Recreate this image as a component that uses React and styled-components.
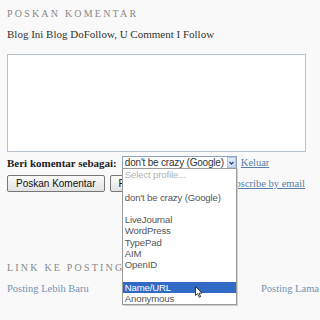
import React from "react";
import styled, { createGlobalStyle } from "styled-components";

const GlobalStyle = createGlobalStyle`
  html, body {
    margin: 0;
    padding: 0;
    background: #f9f9f9;
    overflow: hidden;
  }
`;

const Page = styled.div`
  width: 319px;
  height: 320px;
  padding: 0 14px 0 7px;
  box-sizing: border-box;
  font-family: "Liberation Serif", "Times New Roman", serif;
  color: #333;
`;

const SectionTitle = styled.h4`
  margin: ${(props) => props.top}px 0 0;
  font-size: 10px;
  line-height: 12px;
  font-weight: normal;
  letter-spacing: 2.2px;
  color: #888;
  white-space: nowrap;
`;

const Note = styled.p`
  margin: 7px 0 0;
  font-size: 11px;
  line-height: 14px;
  color: #333;
`;

const TextBox = styled.div`
  margin-top: 13px;
  width: 299px;
  height: 98px;
  box-sizing: border-box;
  background: #fff;
  border: 1px solid #b4c2d0;
`;

const IdentityRow = styled.div`
  margin-top: 4px;
  display: flex;
  align-items: center;
  height: 13px;
`;

const Label = styled.span`
  font-size: 11px;
  font-weight: bold;
  color: #222;
  margin-right: 5px;
  white-space: nowrap;
`;

const SelectWrap = styled.div`
  position: relative;
  flex-shrink: 0;
  width: 115px;
  height: 13px;
  z-index: 5;
`;

const SelectBox = styled.div`
  display: flex;
  align-items: center;
  height: 13px;
  box-sizing: border-box;
  background: #fff;
  border: 1px solid #8fa3ba;
  font-family: "Liberation Sans", Arial, sans-serif;
  font-size: 10px;
  letter-spacing: -0.2px;
  color: #333;
  padding-left: 2px;
  white-space: nowrap;
`;

const SelectText = styled.span`
  flex: 1;
  overflow: hidden;
`;

const ArrowButton = styled.span`
  width: 9px;
  height: 11px;
  box-sizing: border-box;
  background: linear-gradient(#e4eefa, #c6d8ef);
  border: 1px solid #b3c6de;
  display: flex;
  align-items: center;
  justify-content: center;
`;

const ListBox = styled.ul`
  position: absolute;
  top: 12px;
  left: 0;
  width: 115px;
  margin: 0;
  padding: 0;
  list-style: none;
  box-sizing: border-box;
  background: #fff;
  border: 1px solid #9a9a9a;
  box-shadow: 1px 1px 0 #cfcfcf;
  font-family: "Liberation Sans", Arial, sans-serif;
  font-size: 9.6px;
  letter-spacing: -0.15px;
`;

const Option = styled.li`
  position: relative;
  height: 11.25px;
  line-height: 11.25px;
  padding-left: 2px;
  white-space: nowrap;
  color: ${(props) => (props.muted ? "#b4b4b4" : props.active ? "#fff" : "#555")};
  background: ${(props) => (props.active ? "#316ac5" : "transparent")};
`;

const Cursor = styled.svg`
  position: absolute;
  left: 72px;
  top: 4px;
`;

const TextLink = styled.a`
  font-size: 10.5px;
  color: #5a7ea6;
  text-decoration: underline;
  white-space: nowrap;
`;

const KeluarLink = styled(TextLink)`
  margin-left: 4px;
`;

const ButtonRow = styled.div`
  margin-top: 6px;
  display: flex;
  align-items: center;
  gap: 5px;
`;

const Button = styled.button`
  flex-shrink: 0;
  height: 17px;
  padding: 0 8px;
  border: 1px solid #777;
  border-radius: 2px;
  background: linear-gradient(#fbfbfb, #e2e2e2);
  font-family: "Liberation Sans", Arial, sans-serif;
  font-size: 10px;
  color: #111;
  line-height: 15px;
  white-space: nowrap;
`;

const SubscribeLink = styled(TextLink)`
  margin-left: auto;
`;

const Pager = styled.div`
  margin: 8px -14px 0 0;
  display: flex;
  justify-content: space-between;
  line-height: 14px;
  font-size: 10.5px;
`;

const PagerLink = styled.a`
  color: #7393b6;
  text-decoration: none;
  white-space: nowrap;
`;

const profiles = [
  { label: "Select profile...", muted: true },
  { label: "" },
  { label: "don't be crazy (Google)" },
  { label: "" },
  { label: "LiveJournal" },
  { label: "WordPress" },
  { label: "TypePad" },
  { label: "AIM" },
  { label: "OpenID" },
  { label: "" },
  { label: "Name/URL", active: true },
  { label: "Anonymous" },
];

function ProfileSelect() {
  return (
    <SelectWrap>
      <SelectBox>
        <SelectText>don't be crazy (Google)</SelectText>
        <ArrowButton>
          <svg width="5" height="4" viewBox="0 0 5 4">
            <path d="M0.5 0.8 L2.5 3 L4.5 0.8" fill="none" stroke="#1f3f73" strokeWidth="1.2" />
          </svg>
        </ArrowButton>
      </SelectBox>
      <ListBox>
        {profiles.map((p, i) => (
          <Option key={i} muted={p.muted} active={p.active}>
            {p.label || "\u00a0"}
            {p.active && (
              <Cursor width="8" height="12" viewBox="0 0 8 12">
                <path
                  d="M0.5 0.5 L0.5 9.5 L2.6 7.6 L4.2 11.2 L5.6 10.6 L4.1 7.1 L7 7.1 Z"
                  fill="#fff"
                  stroke="#222"
                  strokeWidth="0.9"
                  strokeLinejoin="round"
                />
              </Cursor>
            )}
          </Option>
        ))}
      </ListBox>
    </SelectWrap>
  );
}

export default function App() {
  return (
    <>
      <GlobalStyle />
      <Page>
        <SectionTitle top={8}>POSKAN KOMENTAR</SectionTitle>
        <Note>Blog Ini Blog DoFollow, U Comment I Follow</Note>
        <TextBox />
        <IdentityRow>
          <Label>Beri komentar sebagai:</Label>
          <ProfileSelect />
          <KeluarLink href="#">Keluar</KeluarLink>
        </IdentityRow>
        <ButtonRow>
          <Button>Poskan Komentar</Button>
          <Button>Pratinjau</Button>
          <SubscribeLink href="#">Subscribe by email</SubscribeLink>
        </ButtonRow>
        <SectionTitle top={70}>LINK KE POSTING</SectionTitle>
        <Pager>
          <PagerLink href="#">Posting Lebih Baru</PagerLink>
          <PagerLink href="#">Posting Lama</PagerLink>
        </Pager>
      </Page>
    </>
  );
}
